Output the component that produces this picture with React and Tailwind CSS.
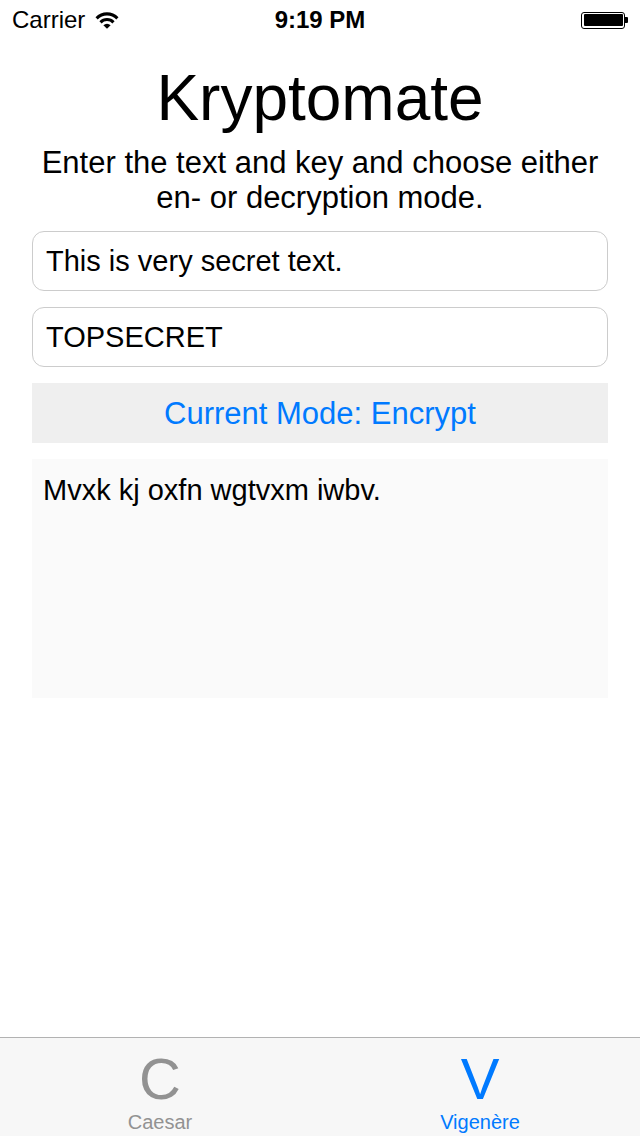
import React from "react";

const font = { fontFamily: '"Liberation Sans", Arial, sans-serif' };

function Wifi() {
  return (
    <svg width="26" height="20" viewBox="0 0 26 20" className="ml-[9px]">
      <path d="M1.5 7.2 A16 16 0 0 1 24.5 7.2 L22.3 9.5 A13 13 0 0 0 3.7 9.5 Z" fill="#000" />
      <path d="M5.4 11.2 A10.5 10.5 0 0 1 20.6 11.2 L18.4 13.4 A7.4 7.4 0 0 0 7.6 13.4 Z" fill="#000" />
      <path d="M9.4 15.2 A5 5 0 0 1 16.6 15.2 L13 18.8 Z" fill="#000" />
    </svg>
  );
}

function Battery() {
  return (
    <div className="flex items-center">
      <div className="w-[44px] h-[17px] rounded-[3px] border-[1.5px] border-black p-[1.5px]">
        <div className="w-full h-full bg-black rounded-[1px]" />
      </div>
      <div className="w-[3px] h-[6px] bg-black rounded-r-[1px]" />
    </div>
  );
}

export default function App() {
  return (
    <div className="w-[640px] h-[1136px] bg-white flex flex-col" style={font}>
      {/* status bar */}
      <div className="h-[40px] flex items-center justify-between px-[12px] relative">
        <div className="flex items-center text-[24px] leading-none text-black">
          <span>Carrier</span>
          <Wifi />
        </div>
        <div className="absolute left-0 right-0 top-0 h-[40px] flex items-center justify-center text-[24px] font-bold leading-none text-black pointer-events-none">
          9:19 PM
        </div>
        <Battery />
      </div>

      {/* content */}
      <div className="flex-1 flex flex-col px-[32px]">
        <h1 className="mt-[26px] text-center text-[64px] leading-[64px] text-black">Kryptomate</h1>
        <p className="mt-[15px] text-center text-[31px] leading-[35px] text-black">
          Enter the text and key and choose either
          <br />
          en- or decryption mode.
        </p>
        <div className="mt-[16px] flex flex-col gap-[16px]">
          <div className="h-[60px] rounded-[12px] border border-[#cccccc] flex items-center px-[13px] pt-[2px] text-[29px] text-black">
            This is very secret text.
          </div>
          <div className="h-[60px] rounded-[12px] border border-[#cccccc] flex items-center px-[13px] pt-[2px] text-[29px] text-black">
            TOPSECRET
          </div>
          <div className="h-[60px] bg-[#efefef] flex items-center justify-center pt-[2px] text-[31px] text-[#007aff]">
            Current Mode: Encrypt
          </div>
          <div className="h-[239px] bg-[#fafafa] px-[11px] pt-[14px] text-[29px] leading-[35px] text-black">
            Mvxk kj oxfn wgtvxm iwbv.
          </div>
        </div>
      </div>

      {/* tab bar */}
      <div className="h-[99px] bg-[#f7f7f7] border-t border-[#b2b2b2] flex">
        <div className="w-1/2 flex flex-col items-center text-[#929292]">
          <span className="text-[58px] leading-[58px] mt-[12px]">C</span>
          <span className="text-[20px] leading-[20px] mt-[4px]">Caesar</span>
        </div>
        <div className="w-1/2 flex flex-col items-center text-[#007aff]">
          <span className="text-[58px] leading-[58px] mt-[12px]">V</span>
          <span className="text-[20px] leading-[20px] mt-[4px]">Vigenère</span>
        </div>
      </div>
    </div>
  );
}
